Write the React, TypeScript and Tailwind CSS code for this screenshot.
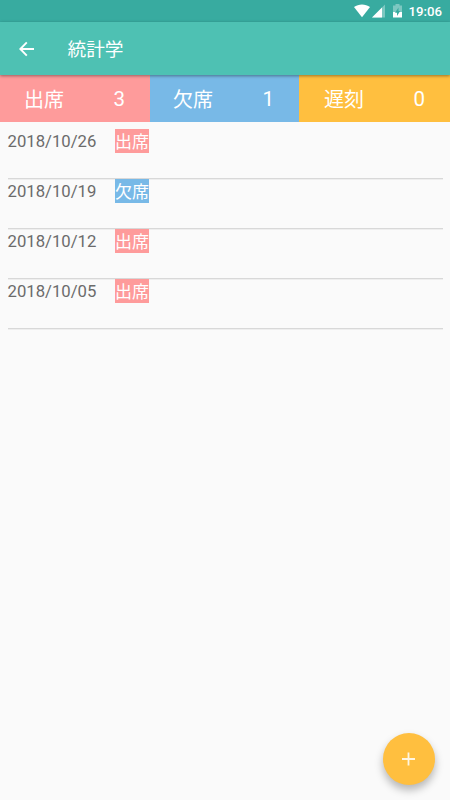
import React from "react";

const summary = [
  { label: "出席", count: 3, color: "bg-[#fe9b9b] pl-[24px]" },
  { label: "欠席", count: 1, color: "bg-[#78b9e7] pl-[23px]" },
  { label: "遅刻", count: 0, color: "bg-[#ffbf3f] pl-[25px]" },
];

const records = [
  { date: "2018/10/26", status: "出席", color: "bg-[#fe9b9b]" },
  { date: "2018/10/19", status: "欠席", color: "bg-[#78b9e7]" },
  { date: "2018/10/12", status: "出席", color: "bg-[#fe9b9b]" },
  { date: "2018/10/05", status: "出席", color: "bg-[#fe9b9b]" },
];

function StatusBar() {
  return (
    <div className="flex h-[22px] items-center justify-end bg-[#38aba0] pr-[8px] text-white">
      <svg width="50" height="22" viewBox="0 0 50 22" className="mr-[5px]">
        <path d="M0 7C4.500 3.600 11.500 3.600 16 7L8 17.300Z" fill="#fff" />
        <path d="M18 17.500L31 4.500V17.500Z" fill="#fff" fillOpacity=".35" />
        <path d="M18 17.500L28 7.500V17.500Z" fill="#fff" />
        <path d="M39 5.500H41.500V4H45.500V5.500H48V12H39Z" fill="#fff" fillOpacity=".35" />
        <path d="M39 12H48V17.500H39Z" fill="#fff" />
        <path d="M44.500 7.500L41 12.700H43V16L46.200 11H44.500Z" fill="#38aba0" />
      </svg>
      <span className="pt-[2px] text-[13.200px] leading-[20px] font-medium">19:06</span>
    </div>
  );
}

export default function App() {
  return (
    <div className="relative flex h-[800px] w-[450px] flex-col overflow-hidden bg-[#fafafa] font-[Roboto,'Noto_Sans_CJK_JP',sans-serif]">
      <StatusBar />
      <header className="z-10 flex h-[53px] items-center bg-[#4ec1b3] pl-[19px] text-white shadow-[0_1px_3px_rgba(0,0,0,0.4)]">
        <svg width="15" height="16" viewBox="0 0 15 16" fill="none" stroke="#fff" strokeWidth="1.900">
          <path d="M15 8H1.500M7.800 1.400L1.300 8L7.800 14.600" />
        </svg>
        <h1 className="ml-[33.500px] pt-[3px] text-[18.700px] leading-[50px] font-normal">統計学</h1>
      </header>
      <section className="grid h-[47px] grid-cols-[150px_149px_151px] text-white">
        {summary.map((s) => (
          <div key={s.label} className={`flex items-center justify-between pr-[25px] ${s.color}`}>
            <span className="pt-[4px] text-[20px] leading-[43px]">{s.label}</span>
            <span className="pt-[2px] text-[20.500px] leading-[45px]">{s.count}</span>
          </div>
        ))}
      </section>
      <ul className="mx-[7.500px] mt-[7px]">
        {records.map((r) => (
          <li key={r.date} className="flex h-[50px] items-start border-b border-[#d8d8d8] shadow-[0_1px_0_#eeeeee]">
            <span className="w-[107.500px] text-[16.700px] leading-[26px] text-[#6b6b6b]">{r.date}</span>
            <span className={`h-[23.500px] w-[34px] pt-[3px] text-[17px] leading-[20px] whitespace-nowrap text-white ${r.color}`}>{r.status}</span>
          </li>
        ))}
      </ul>
      <button className="absolute right-[15px] bottom-[15px] flex size-[52px] items-center justify-center rounded-full bg-[#ffbf3f] shadow-[0_5px_8px_rgba(0,0,0,0.28)]">
        <svg width="14" height="14" viewBox="0 0 14 14" stroke="#fff" strokeOpacity=".85" strokeWidth="1.800">
          <path d="M6.500 .5V13.500M0 7H13" />
        </svg>
      </button>
    </div>
  );
}
